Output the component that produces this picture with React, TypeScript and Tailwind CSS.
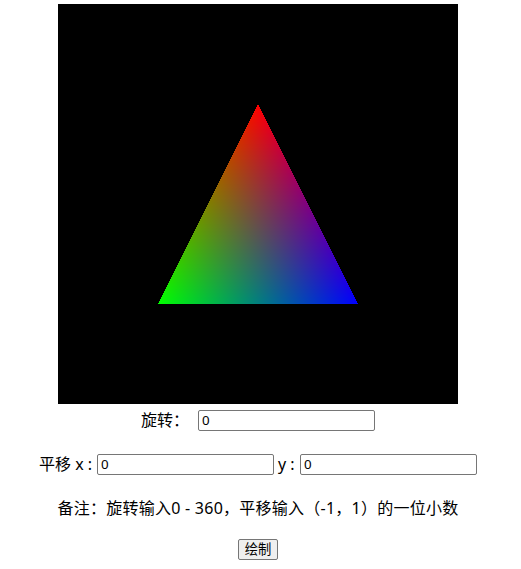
import React, { useEffect, useRef } from "react";

function Triangle() {
  const ref = useRef<HTMLCanvasElement>(null);
  useEffect(() => {
    const c = ref.current;
    if (!c) return;
    const ctx = c.getContext("2d");
    if (!ctx) return;
    const W = 400, H = 400;
    const img = ctx.createImageData(W, H);
    const ax = 200, ay = 100; // red
    const bx = 100, by = 300; // green
    const cx = 300, cy = 300; // blue
    const den = (by - cy) * (ax - cx) + (cx - bx) * (ay - cy);
    for (let y = 0; y < H; y++) {
      for (let x = 0; x < W; x++) {
        const px = x + 0.5, py = y + 0.5;
        const w1 = ((by - cy) * (px - cx) + (cx - bx) * (py - cy)) / den;
        const w2 = ((cy - ay) * (px - cx) + (ax - cx) * (py - cy)) / den;
        const w3 = 1 - w1 - w2;
        const i = (y * W + x) * 4;
        if (w1 >= 0 && w2 >= 0 && w3 >= 0) {
          img.data[i] = Math.round(w1 * 255);
          img.data[i + 1] = Math.round(w2 * 255);
          img.data[i + 2] = Math.round(w3 * 255);
        } else {
          img.data[i] = 0;
          img.data[i + 1] = 0;
          img.data[i + 2] = 0;
        }
        img.data[i + 3] = 255;
      }
    }
    ctx.putImageData(img, 0, 0);
  }, []);
  return <canvas ref={ref} width={400} height={400} className="block w-[400px] h-[400px] bg-black" />;
}

function Field() {
  return (
    <input
      defaultValue="0"
      className="w-[177px] h-[21px] border border-[#767676] rounded-[2px] bg-white pl-[3px] pr-[2px] text-[13.33px] text-black outline-none font-['Noto_Sans','Noto_Sans_CJK_SC',sans-serif]"
    />
  );
}

export default function App() {
  return (
    <div className="w-[516px] flex flex-col items-center pt-[4px] text-[16px] text-black font-['Noto_Sans','Noto_Sans_CJK_SC',sans-serif] leading-[20px]">
      <Triangle />
      <div className="h-[32px] flex items-center">
        <span className="w-[57px] whitespace-nowrap">旋转：</span>
        <Field />
      </div>
      <div className="mt-[12px] h-[32px] flex items-center">
        <span className="w-[58px] whitespace-nowrap">平移 x :</span>
        <Field />
        <span className="w-[26px] pl-[4px] whitespace-nowrap">y :</span>
        <Field />
      </div>
      <div className="mt-[12px] h-[32px] flex items-center whitespace-nowrap tracking-[0.25px]">
        备注：旋转输入0 - 360，平移输入（-1，1）的一位小数
      </div>
      <div className="mt-[9px] h-[32px] flex items-center">
        <button className="h-[21px] px-[6px] border border-[#767676] rounded-[2px] bg-[#efefef] text-[13.33px] leading-[17px] text-black">
          绘制
        </button>
      </div>
    </div>
  );
}
